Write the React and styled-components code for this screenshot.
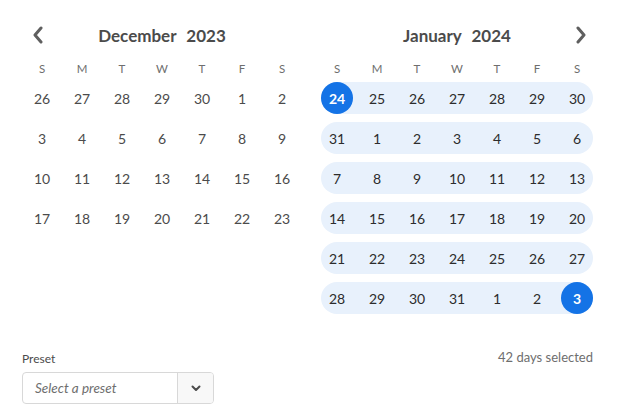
import React from "react";
import styled, { createGlobalStyle } from "styled-components";

const GlobalStyle = createGlobalStyle`
  body {
    margin: 0;
    background: #ffffff;
    font-family: Lato, "Open Sans", sans-serif;
  }
`;

const Wrapper = styled.div`
  padding: 16px 0 0 22px;
  width: 575px;
`;

const Calendars = styled.div`
  display: flex;
  gap: 15px;
`;

const Month = styled.div`
  width: 280px;
`;

const Header = styled.div`
  display: flex;
  align-items: center;
  height: 38px;
  margin-bottom: 6px;
`;

const NavButton = styled.button`
  width: 32px;
  height: 32px;
  padding: 0;
  border: none;
  background: transparent;
  display: flex;
  align-items: center;
  justify-content: center;
  color: #5f5f5f;
`;

const Spacer = styled.div`
  width: 32px;
`;

const Title = styled.div`
  flex: 1;
  text-align: center;
  font-size: 17px;
  font-weight: 700;
  color: #4b4b4b;
  word-spacing: 6px;
`;

const Weekdays = styled.div`
  display: grid;
  grid-template-columns: repeat(7, 40px);
  height: 18px;
  line-height: 18px;
  font-size: 11.5px;
  color: #6e6e6e;
  text-align: center;
`;

const Weeks = styled.div`
  display: flex;
  flex-direction: column;
  gap: 8px;
  padding: 4px;
`;

const Week = styled.div`
  display: grid;
  grid-template-columns: repeat(7, 32px);
  column-gap: 8px;
  height: 32px;
  border-radius: 16px;
  background: ${(p) => (p.$inRange ? "#e8f1fc" : "transparent")};
`;

const Day = styled.div`
  width: 32px;
  height: 32px;
  border-radius: 50%;
  display: flex;
  align-items: center;
  justify-content: center;
  font-size: 14px;
  color: ${(p) => (p.$selected ? "#ffffff" : p.$inRange ? "#2c2c2c" : "#4b4b4b")};
  background: ${(p) => (p.$selected ? "#1473e6" : "transparent")};
  font-weight: ${(p) => (p.$selected ? 700 : 400)};
`;

const Footer = styled.div`
  display: flex;
  justify-content: space-between;
  align-items: flex-start;
  margin-top: 33px;
  padding-right: 4px;
`;

const Field = styled.div`
  display: flex;
  flex-direction: column;
`;

const Label = styled.div`
  font-size: 12px;
  line-height: 16px;
  color: #4b4b4b;
  margin-bottom: 5px;
`;

const Picker = styled.div`
  display: flex;
  width: 192px;
  height: 32px;
  box-sizing: border-box;
  border: 1px solid #d8d8d8;
  border-radius: 4px;
  overflow: hidden;
`;

const Placeholder = styled.div`
  flex: 1;
  display: flex;
  align-items: center;
  padding-left: 12px;
  font-size: 13.5px;
  font-style: italic;
  color: #6e6e6e;
`;

const PickerButton = styled.div`
  width: 35px;
  border-left: 1px solid #d8d8d8;
  background: #f8f8f8;
  display: flex;
  align-items: center;
  justify-content: center;
  color: #4b4b4b;
`;

const Summary = styled.div`
  font-size: 13px;
  line-height: 12px;
  color: #6e6e6e;
`;

const Chevron = ({ dir }) => (
  <svg width="12" height="18" viewBox="0 0 12 18">
    <path
      d={dir === "left" ? "M9 2 L3 9 L9 16" : "M3 2 L9 9 L3 16"}
      fill="none"
      stroke="currentColor"
      strokeWidth="3"
      strokeLinecap="round"
      strokeLinejoin="round"
    />
  </svg>
);

const SmallChevron = () => (
  <svg width="10" height="7" viewBox="0 0 10 7">
    <path
      d="M1.5 1.5 L5 5 L8.5 1.5"
      fill="none"
      stroke="currentColor"
      strokeWidth="2"
      strokeLinecap="round"
      strokeLinejoin="round"
    />
  </svg>
);

const LETTERS = ["S", "M", "T", "W", "T", "F", "S"];

const december = [
  [26, 27, 28, 29, 30, 1, 2],
  [3, 4, 5, 6, 7, 8, 9],
  [10, 11, 12, 13, 14, 15, 16],
  [17, 18, 19, 20, 21, 22, 23],
];

const january = [
  [24, 25, 26, 27, 28, 29, 30],
  [31, 1, 2, 3, 4, 5, 6],
  [7, 8, 9, 10, 11, 12, 13],
  [14, 15, 16, 17, 18, 19, 20],
  [21, 22, 23, 24, 25, 26, 27],
  [28, 29, 30, 31, 1, 2, 3],
];

const MonthView = ({ month, year, weeks, nav, inRange }) => (
  <Month>
    <Header>
      {nav === "left" ? (
        <NavButton>
          <Chevron dir="left" />
        </NavButton>
      ) : (
        <Spacer />
      )}
      <Title>
        {month} {year}
      </Title>
      {nav === "right" ? (
        <NavButton>
          <Chevron dir="right" />
        </NavButton>
      ) : (
        <Spacer />
      )}
    </Header>
    <Weekdays>
      {LETTERS.map((l, i) => (
        <div key={i}>{l}</div>
      ))}
    </Weekdays>
    <Weeks>
      {weeks.map((week, w) => (
        <Week key={w} $inRange={inRange}>
          {week.map((d, i) => {
            const selected =
              inRange &&
              ((w === 0 && i === 0) || (w === weeks.length - 1 && i === 6));
            return (
              <Day key={i} $inRange={inRange} $selected={selected}>
                {d}
              </Day>
            );
          })}
        </Week>
      ))}
    </Weeks>
  </Month>
);

export default function App() {
  return (
    <>
      <GlobalStyle />
      <Wrapper>
        <Calendars>
          <MonthView month="December" year="2023" weeks={december} nav="left" />
          <MonthView
            month="January"
            year="2024"
            weeks={january}
            nav="right"
            inRange
          />
        </Calendars>
        <Footer>
          <Field>
            <Label>Preset</Label>
            <Picker>
              <Placeholder>Select a preset</Placeholder>
              <PickerButton>
                <SmallChevron />
              </PickerButton>
            </Picker>
          </Field>
          <Summary>42 days selected</Summary>
        </Footer>
      </Wrapper>
    </>
  );
}
